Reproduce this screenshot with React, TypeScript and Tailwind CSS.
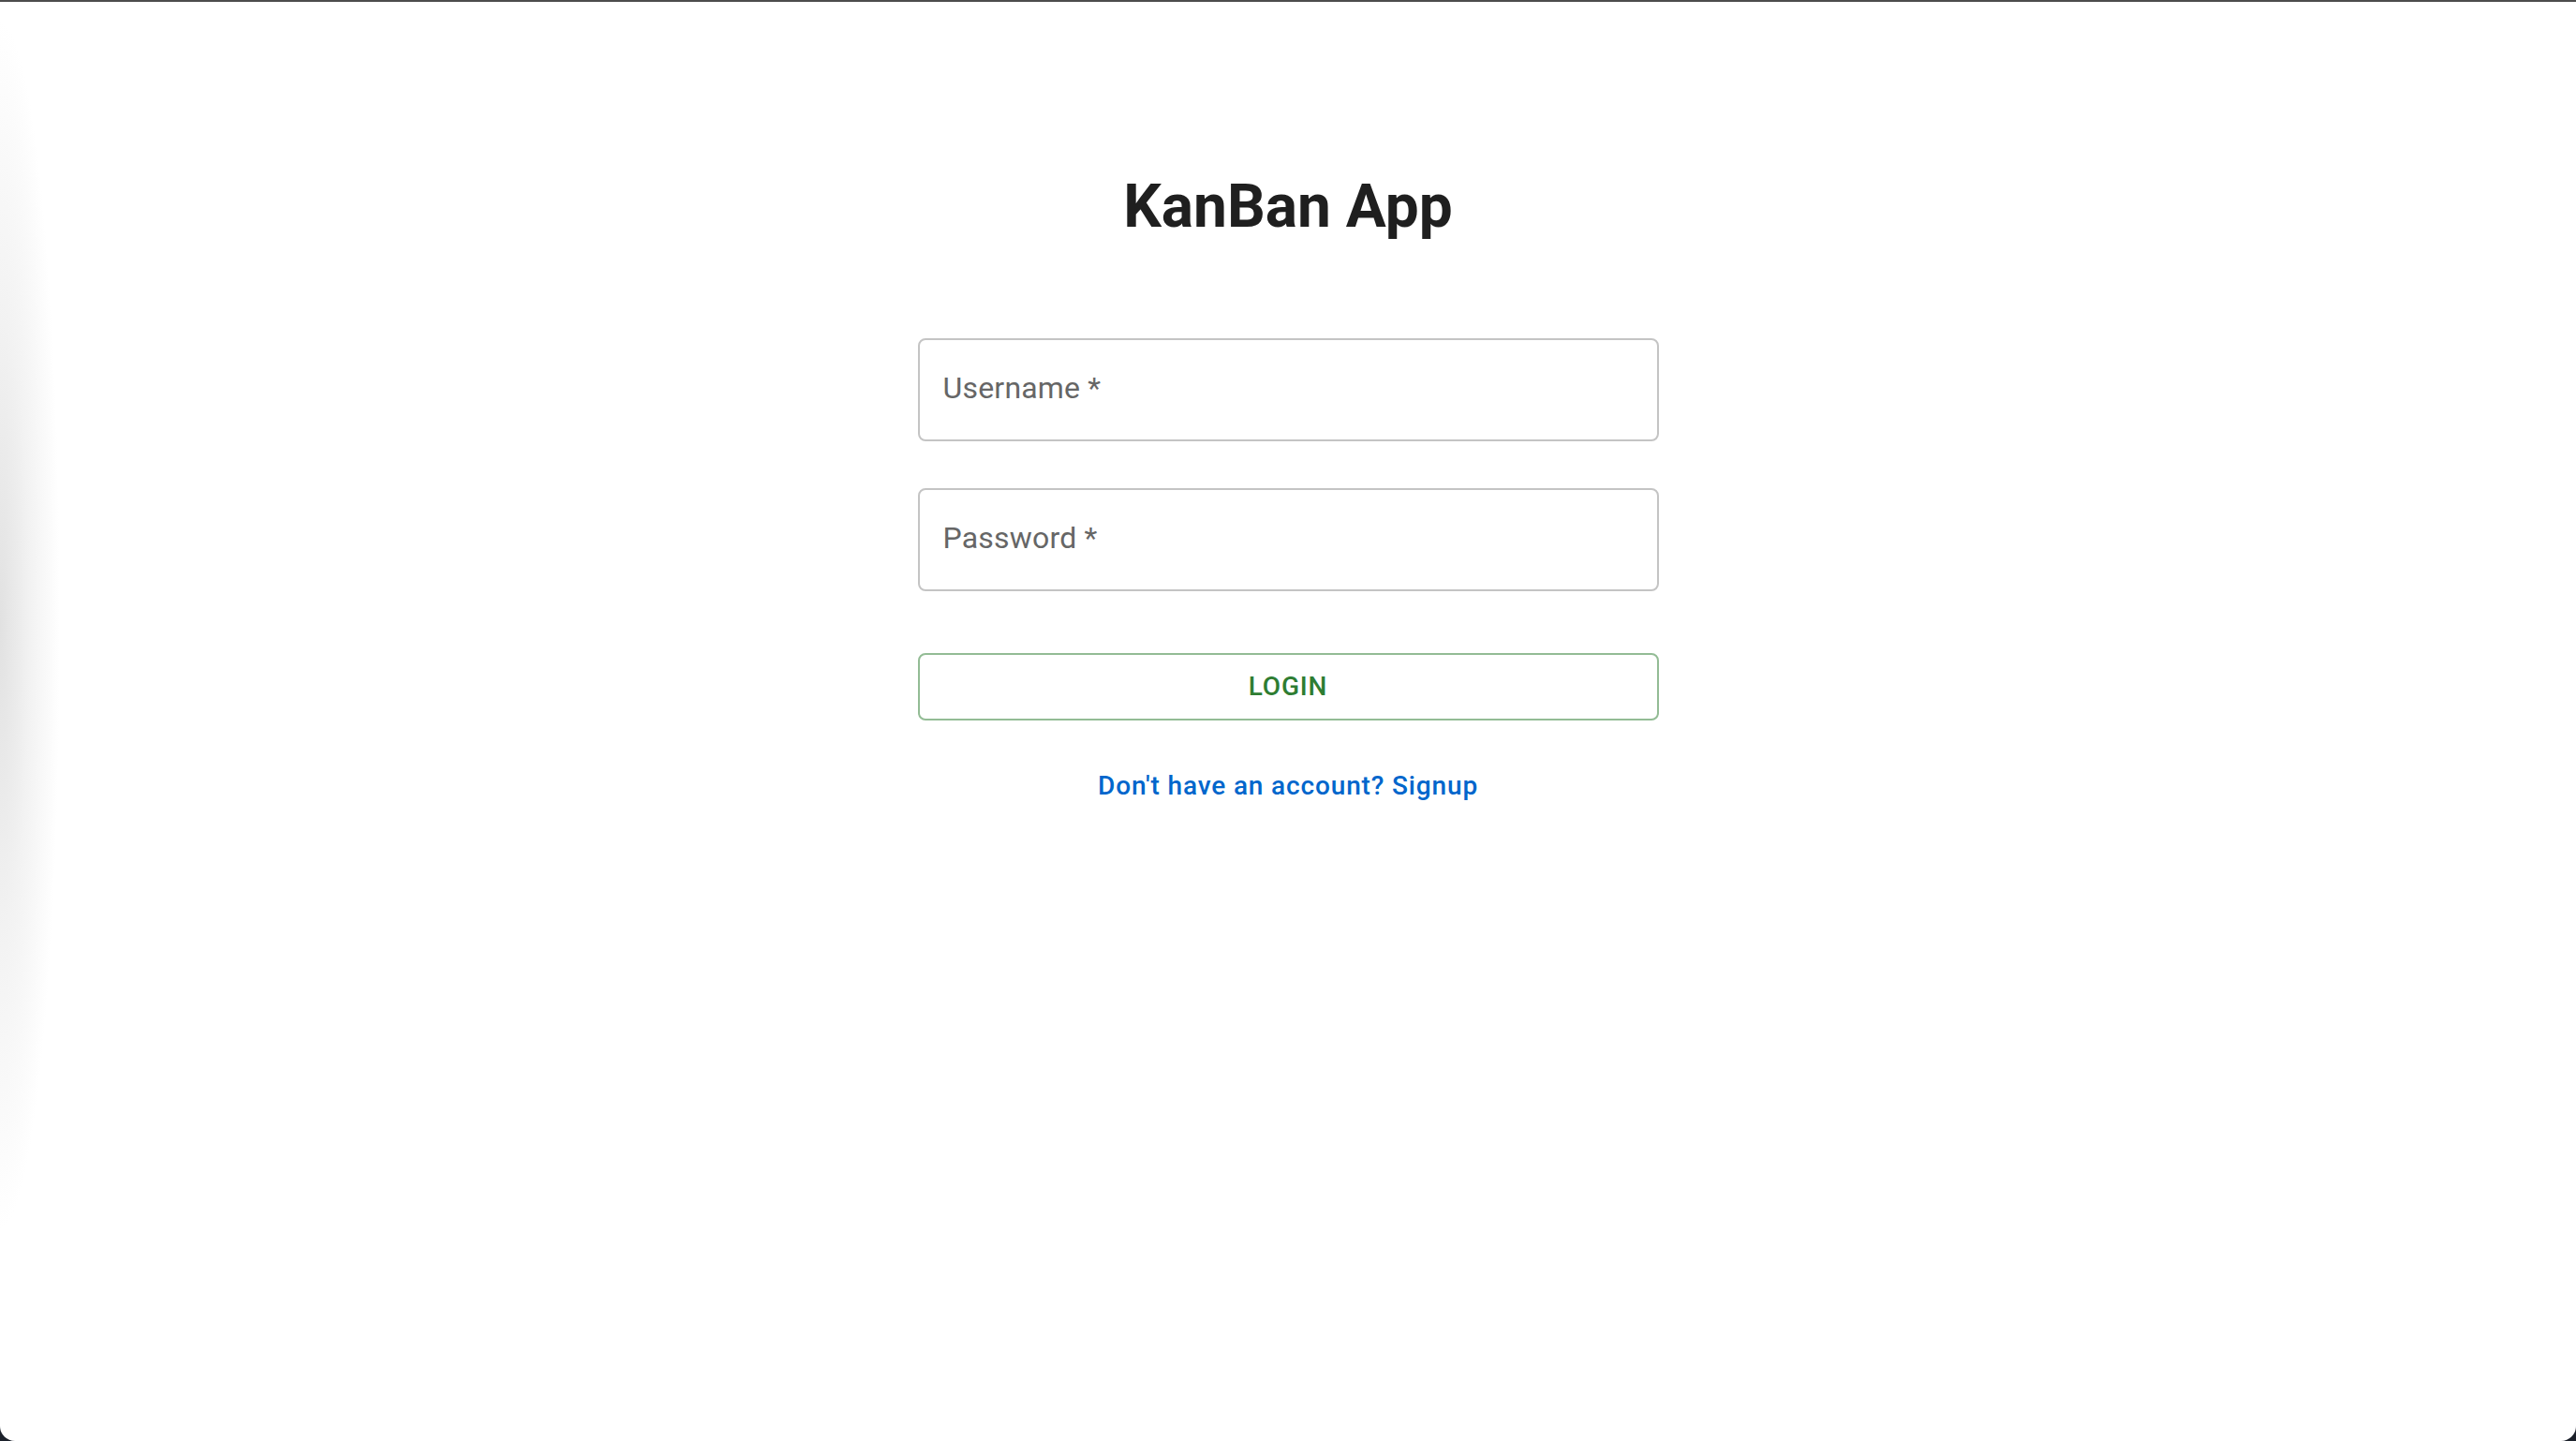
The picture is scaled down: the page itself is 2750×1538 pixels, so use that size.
import React from 'react'

function OutlinedField({ label }: { label: string }) {
  return (
    <div className="flex h-[110px] w-full items-center rounded-[8px] border-2 border-[#c4c4c4] bg-white pl-[25px] pb-[4px]">
      <span className="text-[32px] tracking-[0.2px] text-[#666666]">
        {label}
        <span className="ml-[8px]">*</span>
      </span>
    </div>
  )
}

export default function App() {
  return (
    <div className="h-screen bg-[#1c212b] font-['Roboto',sans-serif]">
      <div className="relative h-full overflow-hidden rounded-b-[16px] border-t-2 border-[#4d4d4d] bg-white">
        {/* faint window shadow along the left edge */}
        <div className="pointer-events-none absolute left-0 top-[20px] h-[1290px] w-[64px] bg-[radial-gradient(ellipse_farthest-side_at_left,#e1e1e1,#f2f2f2_50%,transparent)]" />

        <div className="flex flex-col items-center pt-[181px]">
          <h1 className="text-[64px] font-bold leading-[76px] text-[#1f1f1f]">KanBan App</h1>

          <form className="mt-[102px] flex w-[791px] flex-col">
            <OutlinedField label="Username" />
            <div className="mt-[50px]">
              <OutlinedField label="Password" />
            </div>

            <button
              type="button"
              className="mt-[66px] h-[72px] w-full rounded-[8px] border-2 border-[#93bc95] text-[28px] font-medium tracking-[0.8px] text-[#2e7d32]"
            >
              LOGIN
            </button>

            <button
              type="button"
              className="mt-[45px] self-center text-[28px] font-medium leading-[49px] tracking-[0.85px] text-[#0066cc]"
            >
              Don't have an account? Signup
            </button>
          </form>
        </div>
      </div>
    </div>
  )
}
